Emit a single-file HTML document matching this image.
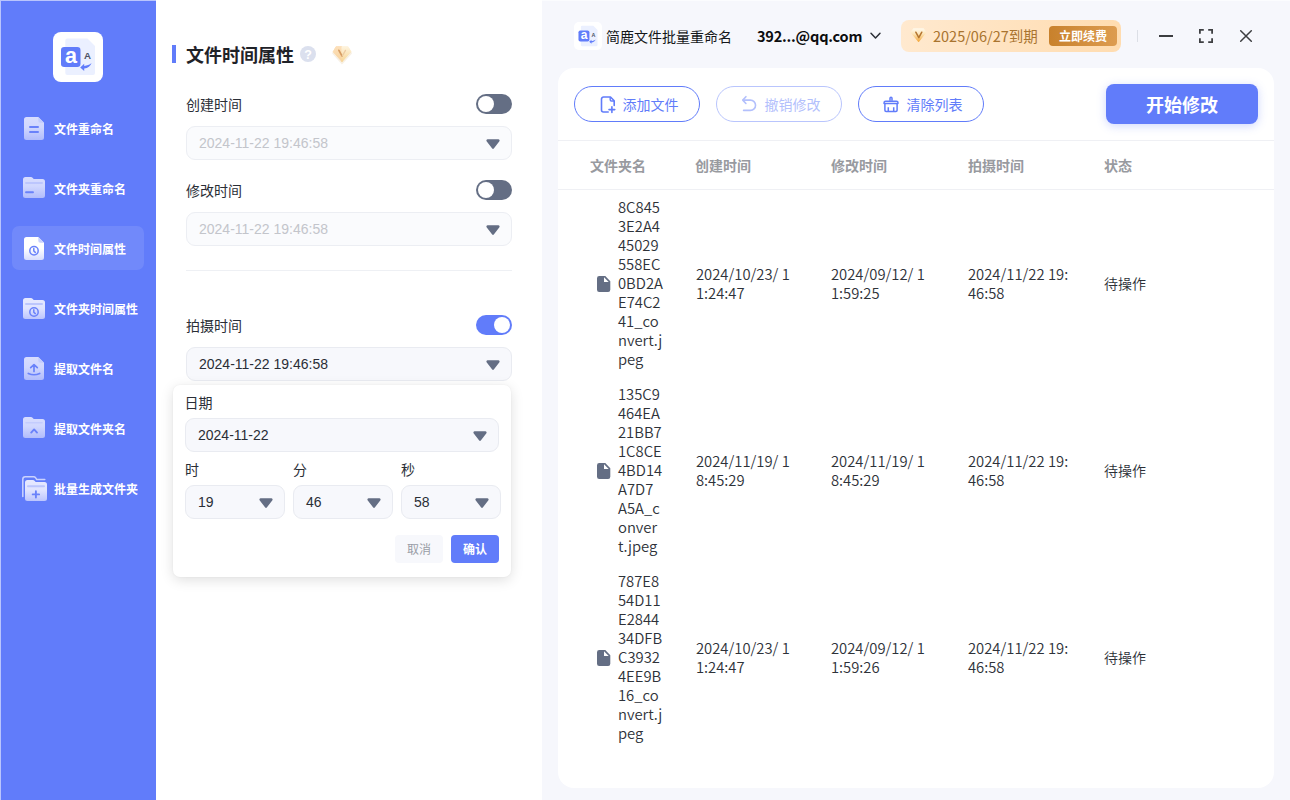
<!DOCTYPE html>
<html lang="zh-CN">
<head>
<meta charset="utf-8">
<title>简鹿文件批量重命名</title>
<style>
*{box-sizing:border-box;margin:0;padding:0}
html,body{width:1290px;height:800px;overflow:hidden}
body{position:relative;background:#f6f7fc;font-family:"Liberation Sans","Noto Sans CJK SC",sans-serif;color:#1f2329;font-size:14px}
.cj{font-family:"Noto Sans CJK SC","Liberation Sans",sans-serif}
.a{position:absolute;white-space:nowrap}
svg{display:block;overflow:visible}
/* sidebar */
#side{position:absolute;left:0;top:0;width:156px;height:800px;background:#617cfa}
#logo{position:absolute;left:53px;top:32px;width:50px;height:50px;border-radius:8px;background:#fff}
.mi{position:absolute;left:12px;width:132px;height:44px;border-radius:7px}
.mi.on{background:rgba(255,255,255,.1)}
.mi svg{position:absolute;left:8px;top:8px}
.mi span{position:absolute;left:42px;top:.5px;line-height:44px;font-size:12px;font-weight:700;color:#fff;white-space:nowrap;font-family:"Noto Sans CJK SC",sans-serif}
/* middle */
#mid{position:absolute;left:156px;top:0;width:386px;height:800px;background:#fff}
.lab{position:absolute;left:186px;font-size:14px;line-height:20px;color:#2a2e36;font-family:"Noto Sans CJK SC",sans-serif;white-space:nowrap}
.tg{position:absolute;left:476px;width:36px;height:20px;border-radius:10px;background:#646e84}
.tg i{position:absolute;left:2px;top:2px;width:16px;height:16px;border-radius:50%;background:#fff}
.tg.on{background:#617cfa}
.tg.on i{left:18px}
.inp{position:absolute;height:34px;border:1px solid #e9ebf1;border-radius:9px;background:#f7f8fc;font-size:14px;line-height:32px;padding-left:12px;color:#2a2e36;white-space:nowrap}
.inp.dis{background:#fafbfd;border-color:#eceef3;color:#c3c5cb}
.inp svg{position:absolute;top:12px}
#pop{position:absolute;left:173px;top:385px;width:338px;height:192px;border-radius:7px;background:#fff;box-shadow:0 3px 13px rgba(0,0,0,.13),0 0 2px rgba(0,0,0,.05)}
.btn{position:absolute;top:535px;width:48px;height:28px;border-radius:4px;font-size:12px;line-height:27px;text-align:center;font-family:"Noto Sans CJK SC",sans-serif}
/* right */
#card{position:absolute;left:558px;top:68px;width:716px;height:720px;border-radius:16px;background:#fff}
.pbtn{position:absolute;top:86px;width:126px;height:36px;border:1px solid #617cfa;border-radius:18px;color:#617cfa;font-size:14px;font-family:"Noto Sans CJK SC",sans-serif}
.pbtn span{position:absolute;top:0;line-height:34px;white-space:nowrap}
.pbtn svg{position:absolute}
.pbtn.dis{border-color:#b9c5fd;color:#b3c0fc}
.hl{position:absolute;left:558px;width:716px;height:1px;background:#eff0f4}
.th{position:absolute;top:155px;font-size:14px;line-height:20px;font-weight:700;color:#989a9f;font-family:"Noto Sans CJK SC",sans-serif;white-space:nowrap}
.td{position:absolute;font-family:"Noto Sans CJK SC","Liberation Sans",sans-serif;font-size:14.8px;font-weight:350;line-height:19px;color:#2e3239;white-space:nowrap}
.st{position:absolute;left:1104px;font-size:14px;font-weight:350;line-height:20px;color:#2b2f36;font-family:"Noto Sans CJK SC",sans-serif;white-space:nowrap}
.fi{position:absolute;left:597px}
</style>
</head>
<body>
<svg width="0" height="0" style="position:absolute">
  <defs>
    <linearGradient id="g1" x1="0" y1="0" x2="0" y2="1"><stop offset="0" stop-color="#d8ddfe"/><stop offset=".45" stop-color="#d0d7fe"/><stop offset="1" stop-color="#b1bcfc"/></linearGradient>
    <linearGradient id="g2" x1="0" y1="0" x2="0" y2="1"><stop offset="0" stop-color="#ffffff"/><stop offset=".5" stop-color="#ffffff"/><stop offset="1" stop-color="#d6dcfe"/></linearGradient>
    <linearGradient id="g3" x1="0" y1="0" x2="0" y2="1"><stop offset="0" stop-color="#e6e9ff"/><stop offset=".5" stop-color="#dfe3ff"/><stop offset="1" stop-color="#bcc5fd"/></linearGradient>
    <linearGradient id="gd" x1="0" y1="0" x2="0" y2="1"><stop offset="0" stop-color="#fff6e4"/><stop offset=".45" stop-color="#fbe3b6"/><stop offset="1" stop-color="#f3ad48"/></linearGradient>
  </defs>
</svg>
<div id="side">
  <div id="logo">
    <svg width="50" height="50" viewBox="0 0 50 50">
      <path d="M14.3 6.6h20.2l7.5 7.5v27a2 2 0 0 1-2 2H14.3a2 2 0 0 1-2-2V8.6a2 2 0 0 1 2-2z" fill="#ebf0ff"/>
      <rect x="8" y="15" width="19.5" height="20" rx="3.2" fill="#617cfa"/>
      <text x="17.9" y="31.2" text-anchor="middle" font-family="Liberation Sans,sans-serif" font-weight="700" font-size="21.5" fill="#fff">a</text>
      <text x="34.6" y="26.8" text-anchor="middle" font-family="Liberation Sans,sans-serif" font-weight="700" font-size="9.700" fill="#4c5366">A</text>
      <path d="M38.600 31.100C37.500 34 35 36.300 31.200 36.600L31.200 39L27.200 35.400L31.200 31.800L31.200 33.900C34 33.800 36.500 32.800 38.600 31.100Z" fill="#617cfa"/>
    </svg>
  </div>
  <div class="mi" style="top:106px">
    <svg width="28" height="28" viewBox="0 0 28 28"><path d="M6.500 3h11.800l5.700 5.700v14.800a2.500 2.500 0 0 1-2.500 2.500h-15a2.500 2.500 0 0 1-2.500-2.500v-18a2.500 2.500 0 0 1 2.500-2.500z" fill="url(#g1)"/><path d="M18.300 3l5.700 5.700h-3.700a2 2 0 0 1-2-2z" fill="#c3ccfd"/><path d="M10 13h8M10 18h8" stroke="#6a82fa" stroke-width="2" stroke-linecap="round"/></svg>
    <span>文件重命名</span></div>
  <div class="mi" style="top:166px">
    <svg width="28" height="28" viewBox="0 0 28 28"><path d="M5.500 3h5.300c.8 0 1.500.3 2 .9l.9 1.100h8.800a2.500 2.500 0 0 1 2.500 2.500v14a2.500 2.500 0 0 1-2.500 2.500h-17a2.500 2.500 0 0 1-2.500-2.500v-16a2.500 2.500 0 0 1 2.500-2.500z" fill="url(#g1)"/><path d="M6 9h16" stroke="#bcc6fd" stroke-width="2" stroke-linecap="round"/><path d="M6 18.300h7" stroke="#6a82fa" stroke-width="1.900" stroke-linecap="round"/></svg>
    <span>文件夹重命名</span></div>
  <div class="mi on" style="top:226px">
    <svg width="28" height="28" viewBox="0 0 28 28"><path d="M6.500 3h11.800l5.700 5.700v14.800a2.500 2.500 0 0 1-2.500 2.500h-15a2.500 2.500 0 0 1-2.500-2.500v-18a2.500 2.500 0 0 1 2.500-2.500z" fill="url(#g2)"/><path d="M18.300 3l5.700 5.700h-3.700a2 2 0 0 1-2-2z" fill="#c9d1fd"/><circle cx="14" cy="16.800" r="4.200" fill="none" stroke="#6a82fa" stroke-width="1.500"/><path d="M13.800 14.600v2.400l1.500 1.400" fill="none" stroke="#6a82fa" stroke-width="1.500" stroke-linecap="round" stroke-linejoin="round"/></svg>
    <span>文件时间属性</span></div>
  <div class="mi" style="top:286px">
    <svg width="28" height="28" viewBox="0 0 28 28"><path d="M5.500 4h5.300c.8 0 1.500.3 2 .9l.9 1.100h8.800a2.500 2.500 0 0 1 2.500 2.500v14a2.500 2.500 0 0 1-2.500 2.500h-17a2.500 2.500 0 0 1-2.500-2.500v-16a2.500 2.500 0 0 1 2.500-2.500z" fill="url(#g3)"/><path d="M6 10h16" stroke="#bcc6fd" stroke-width="2" stroke-linecap="round"/><circle cx="14" cy="18" r="4.200" fill="none" stroke="#6a82fa" stroke-width="1.500"/><path d="M13.800 15.800v2.400l1.500 1.400" fill="none" stroke="#6a82fa" stroke-width="1.500" stroke-linecap="round" stroke-linejoin="round"/></svg>
    <span>文件夹时间属性</span></div>
  <div class="mi" style="top:346px">
    <svg width="28" height="28" viewBox="0 0 28 28"><path d="M6.500 3h11.800l5.700 5.700v14.800a2.500 2.500 0 0 1-2.500 2.500h-15a2.500 2.500 0 0 1-2.500-2.500v-18a2.500 2.500 0 0 1 2.500-2.500z" fill="url(#g1)"/><path d="M18.300 3l5.700 5.700h-3.700a2 2 0 0 1-2-2z" fill="#c3ccfd"/><path d="M14 17.500v-6.500M10.700 13.700l3.300-3.100 3.300 3.100" fill="none" stroke="#6a82fa" stroke-width="1.700" stroke-linecap="round" stroke-linejoin="round"/><path d="M8.300 19.400c3.600 1.700 7.800 1.700 11.400 0" fill="none" stroke="#6a82fa" stroke-width="1.700" stroke-linecap="round"/></svg>
    <span>提取文件名</span></div>
  <div class="mi" style="top:406px">
    <svg width="28" height="28" viewBox="0 0 28 28"><path d="M5.500 3h5.300c.8 0 1.500.3 2 .9l.9 1.100h8.800a2.500 2.500 0 0 1 2.500 2.500v14a2.500 2.500 0 0 1-2.500 2.500h-17a2.500 2.500 0 0 1-2.500-2.500v-16a2.500 2.500 0 0 1 2.500-2.500z" fill="url(#g1)"/><path d="M6 8.800h16" stroke="#c3ccfd" stroke-width="1.600" stroke-linecap="round"/><path d="M11.200 18.600l2.900-3.200 2.900 3.200" fill="none" stroke="#6a82fa" stroke-width="1.900" stroke-linecap="round" stroke-linejoin="round"/></svg>
    <span>提取文件夹名</span></div>
  <div class="mi" style="top:466px">
    <svg width="28" height="28" viewBox="0 0 28 28"><path d="M2.800 22.500v-17.200a2.500 2.500 0 0 1 2.500-2.500h8.300c.9 0 1.600.4 2.100 1.100l1 1.500h8.100" fill="none" stroke="#cbd3fe" stroke-width="1.500" stroke-linecap="round"/><path d="M7.500 6h5.300c.8 0 1.500.3 2 .9l.9 1.100h8.800a2.500 2.500 0 0 1 2.500 2.500v14a2.500 2.500 0 0 1-2.500 2.500h-17a2.500 2.500 0 0 1-2.500-2.500v-16a2.500 2.500 0 0 1 2.500-2.500z" fill="url(#g3)"/><path d="M8 12.300h16" stroke="#bcc6fd" stroke-width="2" stroke-linecap="round"/><path d="M15.900 17.200v6.400M12.700 20.400h6.400" stroke="#6a82fa" stroke-width="1.900" stroke-linecap="round"/></svg>
    <span>批量生成文件夹</span></div>
</div>
<div id="mid"></div>
<!-- title -->
<div class="a" style="left:172px;top:45px;width:4px;height:18px;background:#617cfa"></div>
<div class="a cj" style="left:186px;top:41px;font-size:18px;line-height:26px;font-weight:700;color:#1f2228">文件时间属性</div>
<svg class="a" style="left:300px;top:46px" width="16" height="16" viewBox="0 0 16 16"><circle cx="8" cy="8" r="8" fill="#dbe0ee"/><text x="8" y="12.600" text-anchor="middle" font-family="Liberation Sans,sans-serif" font-weight="700" font-size="12.500" fill="#fff">?</text></svg>
<svg class="a" style="left:332px;top:45px" width="20" height="19" viewBox="0 0 20 19"><defs><linearGradient id="dl" x1="0" y1="0" x2="0" y2="1"><stop offset="0" stop-color="#fce0bb"/><stop offset="1" stop-color="#f8d29c"/></linearGradient><linearGradient id="dr" x1="0" y1="0" x2="0" y2="1"><stop offset="0" stop-color="#fef4df"/><stop offset="1" stop-color="#f7d594"/></linearGradient></defs><path d="M4.100 2H16L18.900 7L10 17L1.200 7Z" fill="#d8b070" opacity=".18" transform="translate(0 1.200)" stroke="#d8b070" stroke-width="2" stroke-linejoin="round"/><path d="M4.100 1.600H10V16.600L1.200 6.800Z" fill="url(#dl)" stroke="url(#dl)" stroke-width="1" stroke-linejoin="round"/><path d="M10 1.600H16L18.900 6.800L10 16.600Z" fill="url(#dr)" stroke="url(#dr)" stroke-width="1" stroke-linejoin="round"/><path d="M6.900 5.300l3.200 5.900" fill="none" stroke="#d69c62" stroke-width="1.700" stroke-linecap="round"/><path d="M10.300 11l3.200-5.600" fill="none" stroke="#eccba2" stroke-width="1.300" stroke-linecap="round"/></svg>

<!-- section 1 -->
<div class="lab" style="top:94px">创建时间</div>
<div class="tg" style="top:94px"><i></i></div>
<div class="inp dis" style="left:186px;top:126px;width:326px">2024-11-22 19:46:58<svg style="left:299px" width="14" height="10" viewBox="0 0 14 10"><path d="M1.600 .3h10.800a1.200 1.200 0 0 1 1 1.900l-5.400 7.100a1.250 1.250 0 0 1-2 0l-5.400-7.100a1.200 1.200 0 0 1 1-1.900z" fill="#646e84"/></svg></div>
<!-- section 2 -->
<div class="lab" style="top:180px">修改时间</div>
<div class="tg" style="top:180px"><i></i></div>
<div class="inp dis" style="left:186px;top:212px;width:326px">2024-11-22 19:46:58<svg style="left:299px" width="14" height="10" viewBox="0 0 14 10"><path d="M1.600 .3h10.800a1.200 1.200 0 0 1 1 1.900l-5.400 7.100a1.250 1.250 0 0 1-2 0l-5.400-7.100a1.200 1.200 0 0 1 1-1.900z" fill="#646e84"/></svg></div>
<div class="a" style="left:186px;top:270px;width:326px;height:1px;background:#eef0f4"></div>
<!-- section 3 -->
<div class="lab" style="top:315px">拍摄时间</div>
<div class="tg on" style="top:315px"><i></i></div>
<div class="inp" style="left:186px;top:347px;width:326px">2024-11-22 19:46:58<svg style="left:299px" width="14" height="10" viewBox="0 0 14 10"><path d="M1.600 .3h10.800a1.200 1.200 0 0 1 1 1.900l-5.400 7.100a1.250 1.250 0 0 1-2 0l-5.400-7.100a1.200 1.200 0 0 1 1-1.900z" fill="#646e84"/></svg></div>
<!-- popup -->
<div id="pop"></div>
<div class="lab" style="left:184.500px;top:392px">日期</div>
<div class="inp" style="left:185px;top:418px;width:314px">2024-11-22<svg style="left:287px" width="14" height="10" viewBox="0 0 14 10"><path d="M1.600 .3h10.800a1.200 1.200 0 0 1 1 1.900l-5.400 7.100a1.250 1.250 0 0 1-2 0l-5.400-7.100a1.200 1.200 0 0 1 1-1.900z" fill="#646e84"/></svg></div>
<div class="lab" style="left:185px;top:459px">时</div>
<div class="lab" style="left:293px;top:459px">分</div>
<div class="lab" style="left:401px;top:459px">秒</div>
<div class="inp" style="left:185px;top:485px;width:100px">19<svg style="left:73px" width="14" height="10" viewBox="0 0 14 10"><path d="M1.600 .3h10.800a1.200 1.200 0 0 1 1 1.900l-5.400 7.100a1.250 1.250 0 0 1-2 0l-5.400-7.100a1.200 1.200 0 0 1 1-1.900z" fill="#646e84"/></svg></div>
<div class="inp" style="left:293px;top:485px;width:100px">46<svg style="left:73px" width="14" height="10" viewBox="0 0 14 10"><path d="M1.600 .3h10.800a1.200 1.200 0 0 1 1 1.900l-5.400 7.100a1.250 1.250 0 0 1-2 0l-5.400-7.100a1.200 1.200 0 0 1 1-1.900z" fill="#646e84"/></svg></div>
<div class="inp" style="left:401px;top:485px;width:100px">58<svg style="left:73px" width="14" height="10" viewBox="0 0 14 10"><path d="M1.600 .3h10.800a1.200 1.200 0 0 1 1 1.900l-5.400 7.100a1.250 1.250 0 0 1-2 0l-5.400-7.100a1.200 1.200 0 0 1 1-1.900z" fill="#646e84"/></svg></div>
<div class="btn" style="left:395px;background:#f7f8fc;color:#999da6">取消</div>
<div class="btn" style="left:451px;background:#617cfa;color:#fff;font-weight:700">确认</div>
<!-- top bar -->
<div class="a" style="left:574px;top:22px;width:28px;height:28px;border-radius:5px;background:#fff">
  <svg width="28" height="28" viewBox="0 0 50 50">
    <path d="M14.300 6.600h20.200l7.500 7.500v27a2 2 0 0 1-2 2H14.300a2 2 0 0 1-2-2V8.600a2 2 0 0 1 2-2z" fill="#ebf0ff"/>
    <rect x="8" y="15" width="19.500" height="20" rx="3.200" fill="#617cfa"/>
    <text x="17.900" y="31.200" text-anchor="middle" font-family="Liberation Sans,sans-serif" font-weight="700" font-size="21.500" fill="#fff">a</text>
    <text x="34.600" y="26.800" text-anchor="middle" font-family="Liberation Sans,sans-serif" font-weight="700" font-size="9.700" fill="#4c5366">A</text>
    <path d="M38.600 31.100C37.500 34 35 36.300 31.200 36.600L31.200 39L27.200 35.400L31.200 31.800L31.200 33.900C34 33.800 36.500 32.800 38.600 31.100Z" fill="#617cfa"/>
  </svg>
</div>
<div class="a cj" style="left:606px;top:26px;font-size:14px;line-height:20px;color:#15171a">简鹿文件批量重命名</div>
<div class="a cj" style="left:757px;top:25px;font-size:14.500px;letter-spacing:-.2px;line-height:22px;font-weight:700;color:#0c0d0f">392...@qq.com</div>
<svg class="a" style="left:870px;top:32px" width="11" height="8" viewBox="0 0 11 8"><path d="M1 1.300l4.500 4.700 4.500-4.700" fill="none" stroke="#2b2f36" stroke-width="1.500" stroke-linecap="round" stroke-linejoin="round"/></svg>
<div class="a" style="left:901px;top:20px;width:220px;height:32px;border-radius:8px;background:linear-gradient(90deg,#ffe9cf,#ffdcb0)"></div>
<svg class="a" style="left:910px;top:28px" width="17" height="15" viewBox="0 0 17 15"><defs><linearGradient id="dp" x1="0" y1="0" x2="0" y2="1"><stop offset="0" stop-color="#fff8ea"/><stop offset=".4" stop-color="#fde6ba"/><stop offset="1" stop-color="#f4ab42"/></linearGradient></defs><path d="M3.700 .9h9.600l2.400 3.500-7.100 8.900-7.400-8.900z" fill="url(#dp)" stroke="url(#dp)" stroke-width="1.200" stroke-linejoin="round"/><path d="M5.800 4.200l3 5.400 3-5.400" fill="none" stroke="#b4752f" stroke-width="1.500" stroke-linecap="round" stroke-linejoin="round"/></svg>
<div class="a cj" style="left:933px;top:25px;font-size:14.500px;line-height:22px;color:#a9742f">2025/06/27到期</div>
<div class="a cj" style="left:1049px;top:26px;width:68px;height:20px;border-radius:4px;background:linear-gradient(90deg,#c8812c,#dd9c50);color:#fff;font-size:12px;line-height:20px;font-weight:700;text-align:center">立即续费</div>
<div class="a" style="left:1137px;top:30px;width:1px;height:12px;background:#dcdfe6"></div>
<div class="a" style="left:1159px;top:35px;width:14px;height:1.600px;background:#3c3d40"></div>
<svg class="a" style="left:1199px;top:29px" width="14" height="14" viewBox="0 0 14 14"><path d="M.9 4.800v-3.900h3.900M9.200 .9h3.900v3.900M13.100 9.200v3.900h-3.900M4.800 13.100h-3.900v-3.900" fill="none" stroke="#3f4043" stroke-width="1.800"/></svg>
<svg class="a" style="left:1240px;top:30px" width="12" height="12" viewBox="0 0 12 12"><path d="M.7 .7l10.600 10.600M11.300 .7l-10.600 10.600" fill="none" stroke="#3c3d40" stroke-width="1.500" stroke-linecap="round"/></svg>

<div id="card"></div>
<!-- toolbar -->
<div class="pbtn" style="left:574px">
  <svg style="left:24.500px;top:9px" width="17" height="18" viewBox="0 0 17 18"><path d="M14.200 9.500v-4.800l-3.700-3.700h-7a2 2 0 0 0-2 2v11a2 2 0 0 0 2 2h4.700" fill="none" stroke="#617cfa" stroke-width="1.600" stroke-linecap="round" stroke-linejoin="round"/><path d="M10.200 1.200v2.600a1.200 1.200 0 0 0 1.200 1.200h2.600" fill="none" stroke="#617cfa" stroke-width="1.400"/><path d="M11.900 10.700v5.800M9 13.600h5.800" stroke="#617cfa" stroke-width="1.600" stroke-linecap="round"/></svg>
  <span style="left:47.500px">添加文件</span></div>
<div class="pbtn dis" style="left:716px">
  <svg style="left:25px;top:9px" width="16" height="16" viewBox="0 0 16 16"><path d="M3.900 .7l-3.100 3.400 3.100 3.400" fill="none" stroke="#b3c0fc" stroke-width="1.600" stroke-linecap="round" stroke-linejoin="round"/><path d="M1.200 4.100h7.200a5.150 5.150 0 0 1 0 10.300h-6.800" fill="none" stroke="#b3c0fc" stroke-width="1.600" stroke-linecap="round"/></svg>
  <span style="left:47.500px">撤销修改</span></div>
<div class="pbtn" style="left:858px">
  <svg style="left:24px;top:9px" width="16" height="17" viewBox="0 0 16 17"><path d="M7 4.800v-2.600a1 1 0 0 1 2 0v2.600" fill="none" stroke="#617cfa" stroke-width="1.500"/><path d="M1.050 7.500v-.85a1.500 1.500 0 0 1 1.500-1.500h10.900a1.500 1.500 0 0 1 1.500 1.500v.85z" fill="none" stroke="#617cfa" stroke-width="1.500" stroke-linejoin="round"/><path d="M1.900 7.500v6.800a1.200 1.200 0 0 0 1.200 1.200h9.800a1.200 1.200 0 0 0 1.200-1.200v-6.800M5.300 15.500v-4.200M10.700 15.500v-4.200" fill="none" stroke="#617cfa" stroke-width="1.500"/></svg>
  <span style="left:47.500px">清除列表</span></div>
<div class="a cj" style="left:1106px;top:84px;width:152px;height:40px;border-radius:8px;background:#617cfa;box-shadow:0 2px 10px rgba(97,124,250,.3);color:#fff;font-size:18px;line-height:40px;font-weight:700;text-align:center">开始修改</div>
<div class="hl" style="top:140px"></div>
<div class="hl" style="top:189px"></div>
<!-- table header -->
<div class="th" style="left:590px">文件夹名</div>
<div class="th" style="left:695px">创建时间</div>
<div class="th" style="left:831px">修改时间</div>
<div class="th" style="left:968px">拍摄时间</div>
<div class="th" style="left:1104px">状态</div>
<!-- rows -->
<svg class="fi" style="top:276px" width="14" height="16" viewBox="0 0 14 16"><path fill-rule="evenodd" d="M2.200 0H8.300L13.300 5.200V13.700a2.200 2.200 0 0 1-2.200 2.200H2.200a2.200 2.200 0 0 1-2.200-2.200V2.200a2.200 2.200 0 0 1 2.200-2.200zM7 1.300V6H11.700z" fill="#646e84"/></svg>
<div class="td" style="left:618px;top:197px">8C845<br>3E2A4<br>45029<br>558EC<br>0BD2A<br>E74C2<br>41_co<br>nvert.j<br>peg</div>
<div class="td" style="left:696px;top:264px">2024/10/23/ 1<br>1:24:47</div>
<div class="td" style="left:831px;top:264px">2024/09/12/ 1<br>1:59:25</div>
<div class="td" style="left:968px;top:264px">2024/11/22 19:<br>46:58</div>
<div class="st" style="top:273px">待操作</div>

<svg class="fi" style="top:463px" width="14" height="16" viewBox="0 0 14 16"><path fill-rule="evenodd" d="M2.200 0H8.300L13.300 5.200V13.700a2.200 2.200 0 0 1-2.200 2.200H2.200a2.200 2.200 0 0 1-2.200-2.200V2.200a2.200 2.200 0 0 1 2.200-2.200zM7 1.300V6H11.700z" fill="#646e84"/></svg>
<div class="td" style="left:618px;top:384px">135C9<br>464EA<br>21BB7<br>1C8CE<br>4BD14<br>A7D7<br>A5A_c<br>onver<br>t.jpeg</div>
<div class="td" style="left:696px;top:451px">2024/11/19/ 1<br>8:45:29</div>
<div class="td" style="left:831px;top:451px">2024/11/19/ 1<br>8:45:29</div>
<div class="td" style="left:968px;top:451px">2024/11/22 19:<br>46:58</div>
<div class="st" style="top:460px">待操作</div>

<svg class="fi" style="top:650px" width="14" height="16" viewBox="0 0 14 16"><path fill-rule="evenodd" d="M2.200 0H8.300L13.300 5.200V13.700a2.200 2.200 0 0 1-2.200 2.200H2.200a2.200 2.200 0 0 1-2.200-2.200V2.200a2.200 2.200 0 0 1 2.200-2.200zM7 1.300V6H11.700z" fill="#646e84"/></svg>
<div class="td" style="left:618px;top:571px">787E8<br>54D11<br>E2844<br>34DFB<br>C3932<br>4EE9B<br>16_co<br>nvert.j<br>peg</div>
<div class="td" style="left:696px;top:638px">2024/10/23/ 1<br>1:24:47</div>
<div class="td" style="left:831px;top:638px">2024/09/12/ 1<br>1:59:26</div>
<div class="td" style="left:968px;top:638px">2024/11/22 19:<br>46:58</div>
<div class="st" style="top:647px">待操作</div>
<div class="a" style="left:0;top:0;width:1290px;height:1px;background:rgba(255,255,255,.56)"></div>
<div class="a" style="left:0;top:1px;width:1px;height:799px;background:rgba(255,255,255,.56)"></div>
</body>
</html>
